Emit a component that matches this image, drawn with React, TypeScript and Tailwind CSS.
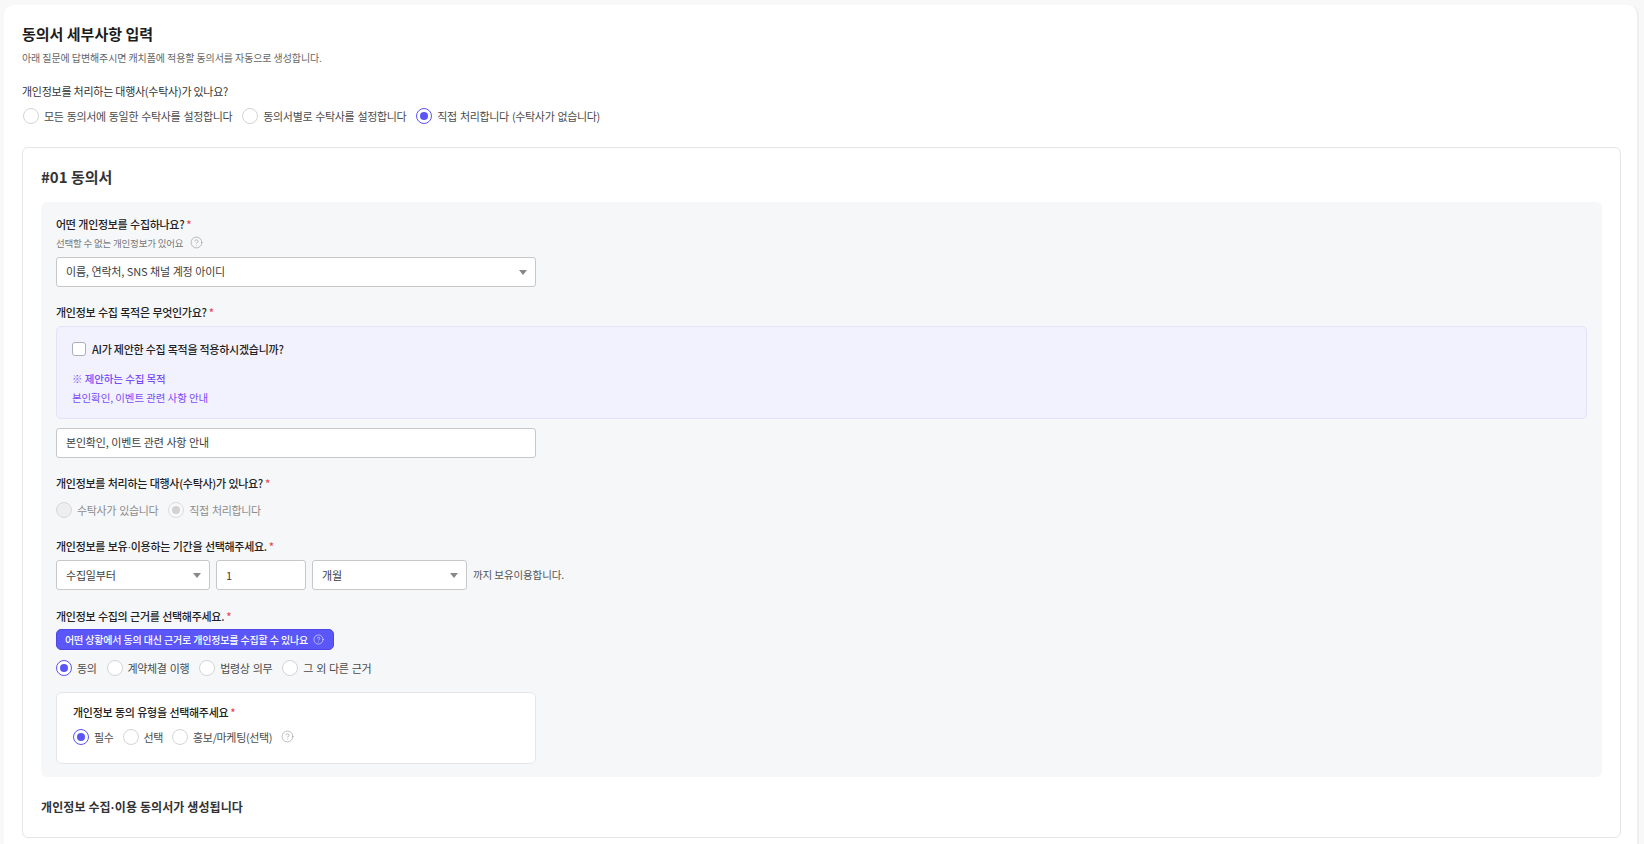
import { CircleHelp } from 'lucide-react'
import type { ReactNode } from 'react'

const font = { fontFamily: '"Noto Sans CJK KR", "Noto Sans", sans-serif' }

function Radio({ label, checked, disabled }: { label: string; checked?: boolean; disabled?: boolean }) {
  return (
    <label className="flex items-center gap-[5px]">
      <span
        className={`flex size-[16px] items-center justify-center rounded-full border ${
          disabled
            ? checked
              ? 'border-[#dcdcdc] bg-[#f8f8f8]'
              : 'border-[#d8d8dc] bg-[#eeeef1]'
            : checked
              ? 'border-[#5b55f6] bg-white'
              : 'border-[#d4d4d4] bg-white'
        }`}
      >
        {checked && <span className={`size-[8px] rounded-full ${disabled ? 'bg-[#d2d2d2]' : 'bg-[#5b55f6]'}`} />}
      </span>
      <span
        className={`text-[11px] tracking-[-0.35px] [word-spacing:1px] ${disabled ? 'text-[#8c8c8c]' : 'text-[#4b4b4b]'}`}
      >
        {label}
      </span>
    </label>
  )
}

function Question({ children }: { children: ReactNode }) {
  return (
    <p className="text-[11px] leading-[16px] font-medium tracking-[-0.3px] [word-spacing:0.5px] text-[#222]">
      {children}
      <span className="ml-[2px] text-[#e5484d]">*</span>
    </p>
  )
}

function Dot() {
  return <span className="font-['Liberation_Sans']">·</span>
}

function Field({ value, className, arrow }: { value: string; className: string; arrow?: boolean }) {
  return (
    <div
      className={`flex h-[30px] items-center justify-between rounded-[3px] border border-[#c8c8c8] bg-white pr-[8px] pl-[9px] text-[11px] tracking-[-0.2px] [word-spacing:0.5px] text-[#3d3d3d] ${className}`}
    >
      <span>{value}</span>
      {arrow && <span className="mt-[1px] border-x-[4.5px] border-t-[5px] border-x-transparent border-t-[#888]" />}
    </div>
  )
}

export default function App() {
  return (
    <div className="h-[844px] overflow-hidden bg-[#f8f8f8] pt-[5px] pr-[5px] pl-[4px]" style={font}>
      <div className="h-[860px] rounded-t-[10px] border-r-2 border-[#efefef] bg-white pt-[19px] pr-[16px] pl-[18px]">
        <h1 className="text-[15px] leading-[20px] font-bold text-[#1c1c1c]">동의서 세부사항 입력</h1>
        <p className="mt-[4px] text-[10px] leading-[20px] tracking-[-0.1px] text-[#666]">
          아래 질문에 답변해주시면 캐치폼에 적용할 동의서를 자동으로 생성합니다.
        </p>
        <p className="mt-[15px] text-[11px] leading-[16px] tracking-[-0.25px] text-[#333]">
          개인정보를 처리하는 대행사(수탁사)가 있나요?
        </p>
        <div className="mt-[9px] ml-[1px] flex items-center gap-[10px]">
          <Radio label="모든 동의서에 동일한 수탁사를 설정합니다" />
          <Radio label="동의서별로 수탁사를 설정합니다" />
          <Radio label="직접 처리합니다 (수탁사가 없습니다)" checked />
        </div>

        <div className="mt-[22px] h-[691px] rounded-[6px] border border-[#e6e6e6] px-[18px] pt-[19px]">
          <h2 className="text-[15px] leading-[20px] font-bold text-[#333]">#01 동의서</h2>
          <div className="mt-[15px] h-[575px] rounded-[6px] bg-[#f6f7f9] px-[15px] pt-[14px]">
            <Question>어떤 개인정보를 수집하나요?</Question>
            <div className="mt-[4px] flex items-center gap-[7px] text-[9.5px] leading-[14px] tracking-[-0.2px] text-[#777]">
              선택할 수 없는 개인정보가 있어요
              <CircleHelp size={13} strokeWidth={1.2} className="text-[#999]" />
            </div>
            <Field value="이름, 연락처, SNS 채널 계정 아이디" className="mt-[7px] w-[480px]" arrow />

            <div className="mt-[17px]">
              <Question>개인정보 수집 목적은 무엇인가요?</Question>
            </div>
            <div className="mt-[6px] h-[93px] rounded-[5px] border border-[#e2e2fb] bg-[#f2f2fe] pt-[14px] pl-[15px]">
              <div className="flex items-center gap-[6px]">
                <span className="size-[14px] rounded-[3px] border border-[#a9b0bb] bg-white" />
                <span className="text-[11px] leading-[16px] font-medium tracking-[-0.25px] text-[#222]">
                  AI가 제안한 수집 목적을 적용하시겠습니까?
                </span>
              </div>
              <p className="mt-[14px] text-[10.5px] leading-[16px] font-medium tracking-[-0.1px] text-[#7a4cf7]">
                ※ 제안하는 수집 목적
              </p>
              <p className="mt-[3px] text-[10.5px] leading-[16px] tracking-[-0.1px] text-[#7a4cf7]">
                본인확인, 이벤트 관련 사항 안내
              </p>
            </div>
            <Field value="본인확인, 이벤트 관련 사항 안내" className="mt-[9px] w-[480px]" />

            <div className="mt-[17px]">
              <Question>개인정보를 처리하는 대행사(수탁사)가 있나요?</Question>
            </div>
            <div className="mt-[11px] flex items-center gap-[10px]">
              <Radio label="수탁사가 있습니다" disabled />
              <Radio label="직접 처리합니다" checked disabled />
            </div>

            <div className="mt-[20px]">
              <Question>
                개인정보를 보유
                <Dot />
                이용하는 기간을 선택해주세요.
              </Question>
            </div>
            <div className="mt-[5px] flex items-center gap-[6px]">
              <Field value="수집일부터" className="w-[154px]" arrow />
              <Field value="1" className="w-[90px]" />
              <Field value="개월" className="w-[155px]" arrow />
              <span className="text-[10.5px] tracking-[-0.1px] text-[#555]">까지 보유이용합니다.</span>
            </div>

            <div className="mt-[18px]">
              <Question>개인정보 수집의 근거를 선택해주세요.</Question>
            </div>
            <div className="mt-[5px] flex h-[21px] w-[278px] items-center gap-[5px] rounded-[5px] border border-[#4f46e5] bg-[#5a56f7] pl-[8px] text-[10px] font-medium tracking-[-0.15px] text-white">
              어떤 상황에서 동의 대신 근거로 개인정보를 수집할 수 있나요
              <CircleHelp size={11} strokeWidth={1.2} />
            </div>
            <div className="mt-[10px] flex items-center gap-[10px]">
              <Radio label="동의" checked />
              <Radio label="계약체결 이행" />
              <Radio label="법령상 의무" />
              <Radio label="그 외 다른 근거" />
            </div>

            <div className="mt-[15px] h-[72px] w-[480px] rounded-[6px] border border-[#e6e6e6] bg-white pt-[11px] pl-[16px]">
              <Question>개인정보 동의 유형을 선택해주세요</Question>
              <div className="mt-[9px] flex items-center gap-[9px]">
                <Radio label="필수" checked />
                <Radio label="선택" />
                <Radio label="홍보/마케팅(선택)" />
                <CircleHelp size={13} strokeWidth={1.2} className="text-[#999]" />
              </div>
            </div>
          </div>
          <h3 className="mt-[21px] text-[12px] leading-[18px] font-bold tracking-[0.1px] text-[#333]">
            개인정보 수집
            <Dot />
            이용 동의서가 생성됩니다
          </h3>
        </div>
      </div>
    </div>
  )
}
